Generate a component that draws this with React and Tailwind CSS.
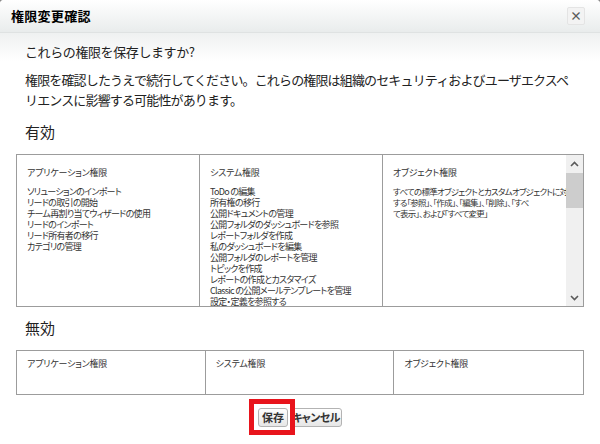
import React from "react";

const enabledApp = [
  "ソリューションのインポート",
  "リードの取引の開始",
  "チーム再割り当てウィザードの使用",
  "リードのインポート",
  "リード所有者の移行",
  "カテゴリの管理",
];

const enabledSys = [
  "ToDo の編集",
  "所有権の移行",
  "公開ドキュメントの管理",
  "公開フォルダのダッシュボードを参照",
  "レポートフォルダを作成",
  "私のダッシュボードを編集",
  "公開フォルダのレポートを管理",
  "トピックを作成",
  "レポートの作成とカスタマイズ",
  "Classic の公開メールテンプレートを管理",
  "設定・定義を参照する",
];

const enabledObj = [
  "すべての標準オブジェクトとカスタムオブジェクトに対",
  "する「参照」、「作成」、「編集」、「削除」、「すべ",
  "て表示」、および「すべて変更」",
];

function Chevron({ up }) {
  return (
    <svg width="9" height="6" viewBox="0 0 9 6">
      <polyline
        points={up ? "1,5 4.5,1.5 8,5" : "1,1 4.5,4.5 8,1"}
        fill="none"
        stroke="#5a5a5a"
        strokeWidth="1.6"
      />
    </svg>
  );
}

function Cell({ title, items, last }) {
  return (
    <div className={`px-[10px] pt-[12px] ${last ? "" : "border-r border-[#9c9c9c]"}`}>
      <div className="leading-[11px] tracking-[-0.2px]">{title}</div>
      <div className="mt-[8px]">
        {items.map((t) => (
          <div key={t} className="leading-[11px] whitespace-nowrap tracking-[-0.7px]">{t}</div>
        ))}
      </div>
    </div>
  );
}

export default function App() {
  return (
    <div className="w-[600px] h-[444px] bg-[#8a8a8a] font-['Noto_Sans_CJK_JP',sans-serif]">
      <div className="w-full h-full bg-white rounded-t-[4px] overflow-hidden flex flex-col">
        {/* Header */}
        <div className="h-[33px] shrink-0 flex items-center justify-between pl-[11px] pr-[15px] bg-gradient-to-b from-white to-[#e9ecec] border-b border-[#dfe2e2]">
          <h1 className="text-[13px] font-bold text-black tracking-[0.3px]">権限変更確認</h1>
          <button className="w-[18px] h-[18px] flex items-center justify-center rounded-[2px] bg-[#f3f3f3] border border-[#e4e4e4] text-[#5b5b5b] text-[12px] font-bold leading-none">
            ×
          </button>
        </div>

        {/* Body */}
        <div className="flex-1 bg-gradient-to-b from-[#eff1f1] to-white to-[28px] text-[#222]">
          <div className="pl-[25px] pt-[9px] text-[13px]">
            <p className="leading-[20px] tracking-[-0.4px]">これらの権限を保存しますか?</p>
            <p className="mt-[8px] leading-[20px] whitespace-nowrap tracking-[-0.85px]">
              権限を確認したうえで続行してください。これらの権限は組織のセキュリティおよびユーザエクスペ
              <br />
              リエンスに影響する可能性があります。
            </p>
            <h2 className="mt-[12px] text-[15px] leading-[20px]">有効</h2>
          </div>

          <div className="mx-4 mt-[12px] h-[153px] border border-[#9c9c9c] flex overflow-hidden text-[9px] text-[#333] [font-feature-settings:'palt']">
            <div className="flex-1 grid grid-cols-3">
              <Cell title="アプリケーション権限" items={enabledApp} />
              <Cell title="システム権限" items={enabledSys} />
              <div className="pl-[10px] pt-[12px] min-w-0">
                <div className="leading-[11px] tracking-[-0.2px]">オブジェクト権限</div>
                <div className="mt-[8px] text-[8.5px]">
                  {enabledObj.map((t) => (
                    <div key={t} className="leading-[11px] whitespace-nowrap tracking-[-0.75px]">{t}</div>
                  ))}
                </div>
              </div>
            </div>
            <div className="w-[17px] shrink-0 bg-[#f0f0f0] flex flex-col">
              <div className="h-[17px] flex items-center justify-center">
                <Chevron up />
              </div>
              <div className="mt-[1px] h-[35px] bg-[#cdcdcd]" />
              <div className="flex-1" />
              <div className="h-[17px] flex items-center justify-center">
                <Chevron />
              </div>
            </div>
          </div>

          <h2 className="pl-[25px] mt-[11px] text-[15px] leading-[20px]">無効</h2>

          <div className="mx-4 mt-[12px] h-[45px] border border-[#9c9c9c] grid grid-cols-3 text-[9px] text-[#333] [font-feature-settings:'palt']">
            <div className="px-[10px] pt-[7px] border-r border-[#9c9c9c] leading-[11px] tracking-[-0.2px]">アプリケーション権限</div>
            <div className="px-[10px] pt-[7px] border-r border-[#9c9c9c] leading-[11px] tracking-[-0.2px]">システム権限</div>
            <div className="px-[10px] pt-[7px] leading-[11px] tracking-[-0.2px]">オブジェクト権限</div>
          </div>

          {/* Buttons */}
          <div className="mt-[13px] flex items-start justify-center gap-[2px] [font-feature-settings:'palt']">
            <div className="relative flex">
              <button className="h-[19px] w-[30px] rounded-[3px] border border-[#b3b3b3] bg-gradient-to-b from-white to-[#e6e6e6] text-[11px] font-bold text-[#333] leading-none">
                保存
              </button>
              <div className="absolute -left-[9px] -right-[7px] -top-[9px] -bottom-[8px] border-[5px] border-[#e8141c]" />
            </div>
            <button className="h-[19px] w-[52px] rounded-[3px] border border-[#b3b3b3] bg-gradient-to-b from-white to-[#e6e6e6] text-[11px] font-bold text-[#333] leading-none tracking-[-0.6px]">
              キャンセル
            </button>
          </div>
        </div>
      </div>
    </div>
  );
}
